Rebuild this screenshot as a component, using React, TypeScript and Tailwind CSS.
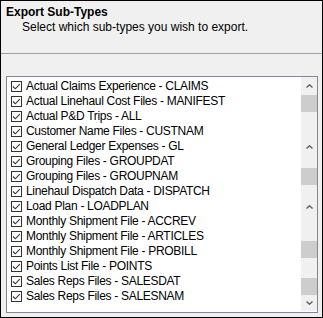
import React from "react";

const items = [
  "Actual Claims Experience - CLAIMS",
  "Actual Linehaul Cost Files - MANIFEST",
  "Actual P&D Trips - ALL",
  "Customer Name Files - CUSTNAM",
  "General Ledger Expenses - GL",
  "Grouping Files - GROUPDAT",
  "Grouping Files - GROUPNAM",
  "Linehaul Dispatch Data - DISPATCH",
  "Load Plan - LOADPLAN",
  "Monthly Shipment File - ACCREV",
  "Monthly Shipment File - ARTICLES",
  "Monthly Shipment File - PROBILL",
  "Points List File - POINTS",
  "Sales Reps Files - SALESDAT",
  "Sales Reps Files - SALESNAM",
];

function Check() {
  return (
    <svg width="11" height="11" viewBox="0 0 11 11" className="shrink-0">
      <rect x="0.5" y="0.5" width="10" height="10" fill="#fff" stroke="#333" />
      <path d="M2 5.5 L4.3 7.8 L8.8 3.2" fill="none" stroke="#333" strokeWidth="1.1" />
    </svg>
  );
}

function Up() {
  return (
    <svg width="7" height="4" viewBox="0 0 7 4">
      <path d="M0.5 3.5 L3.5 0.8 L6.5 3.5" fill="none" stroke="#606060" strokeWidth="1.4" />
    </svg>
  );
}

function Down() {
  return (
    <svg width="7" height="4" viewBox="0 0 7 4">
      <path d="M0.5 0.5 L3.5 3.2 L6.5 0.5" fill="none" stroke="#606060" strokeWidth="1.4" />
    </svg>
  );
}

export default function App() {
  return (
    <div
      className="w-[323px] h-[318px] border border-black bg-[#f0f0f0] flex flex-col text-black text-[12px]"
      style={{ fontFamily: '"Segoe UI", "Liberation Sans", Arial, sans-serif' }}
    >
      <div className="h-[52px] pt-[3px] pl-[5px]">
        <div className="font-bold leading-[16px]">Export Sub-Types</div>
        <div className="pl-[16px] leading-[15px]">Select which sub-types you wish to export.</div>
      </div>
      <div className="h-px bg-[#a0a0a0]" />
      <div className="h-[22px]" />
      <div className="ml-[5px] w-[312px] h-[237px] border border-[#828790] bg-white flex">
        <div className="flex-1 pt-[2px] pl-[4px]">
          {items.map((t) => (
            <div key={t} className="h-[15px] flex items-center gap-[4px] leading-[15px] whitespace-nowrap">
              <Check />
              <span className="tracking-[-0.3px]">{t}</span>
            </div>
          ))}
        </div>
        <div className="w-[16px] flex flex-col self-start bg-[#f0f0f0]">
          <div className="h-[18px] flex items-center justify-center"><Up /></div>
          <div className="h-[17px] bg-[#cdcdcd]" />
          <div className="h-[26px]" />
          <div className="h-[18px] flex items-center justify-center"><Up /></div>
          <div className="h-[12px]" />
          <div className="h-[17px] bg-[#cdcdcd]" />
          <div className="h-[13px]" />
          <div className="h-[18px] flex items-center justify-center"><Up /></div>
          <div className="h-[25px]" />
          <div className="h-[17px] bg-[#cdcdcd]" />
          <div className="h-[20px]" />
          <div className="h-[17px] bg-[#cdcdcd]" />
          <div className="h-[16px] flex items-center justify-center"><Down /></div>
        </div>
      </div>
    </div>
  );
}
